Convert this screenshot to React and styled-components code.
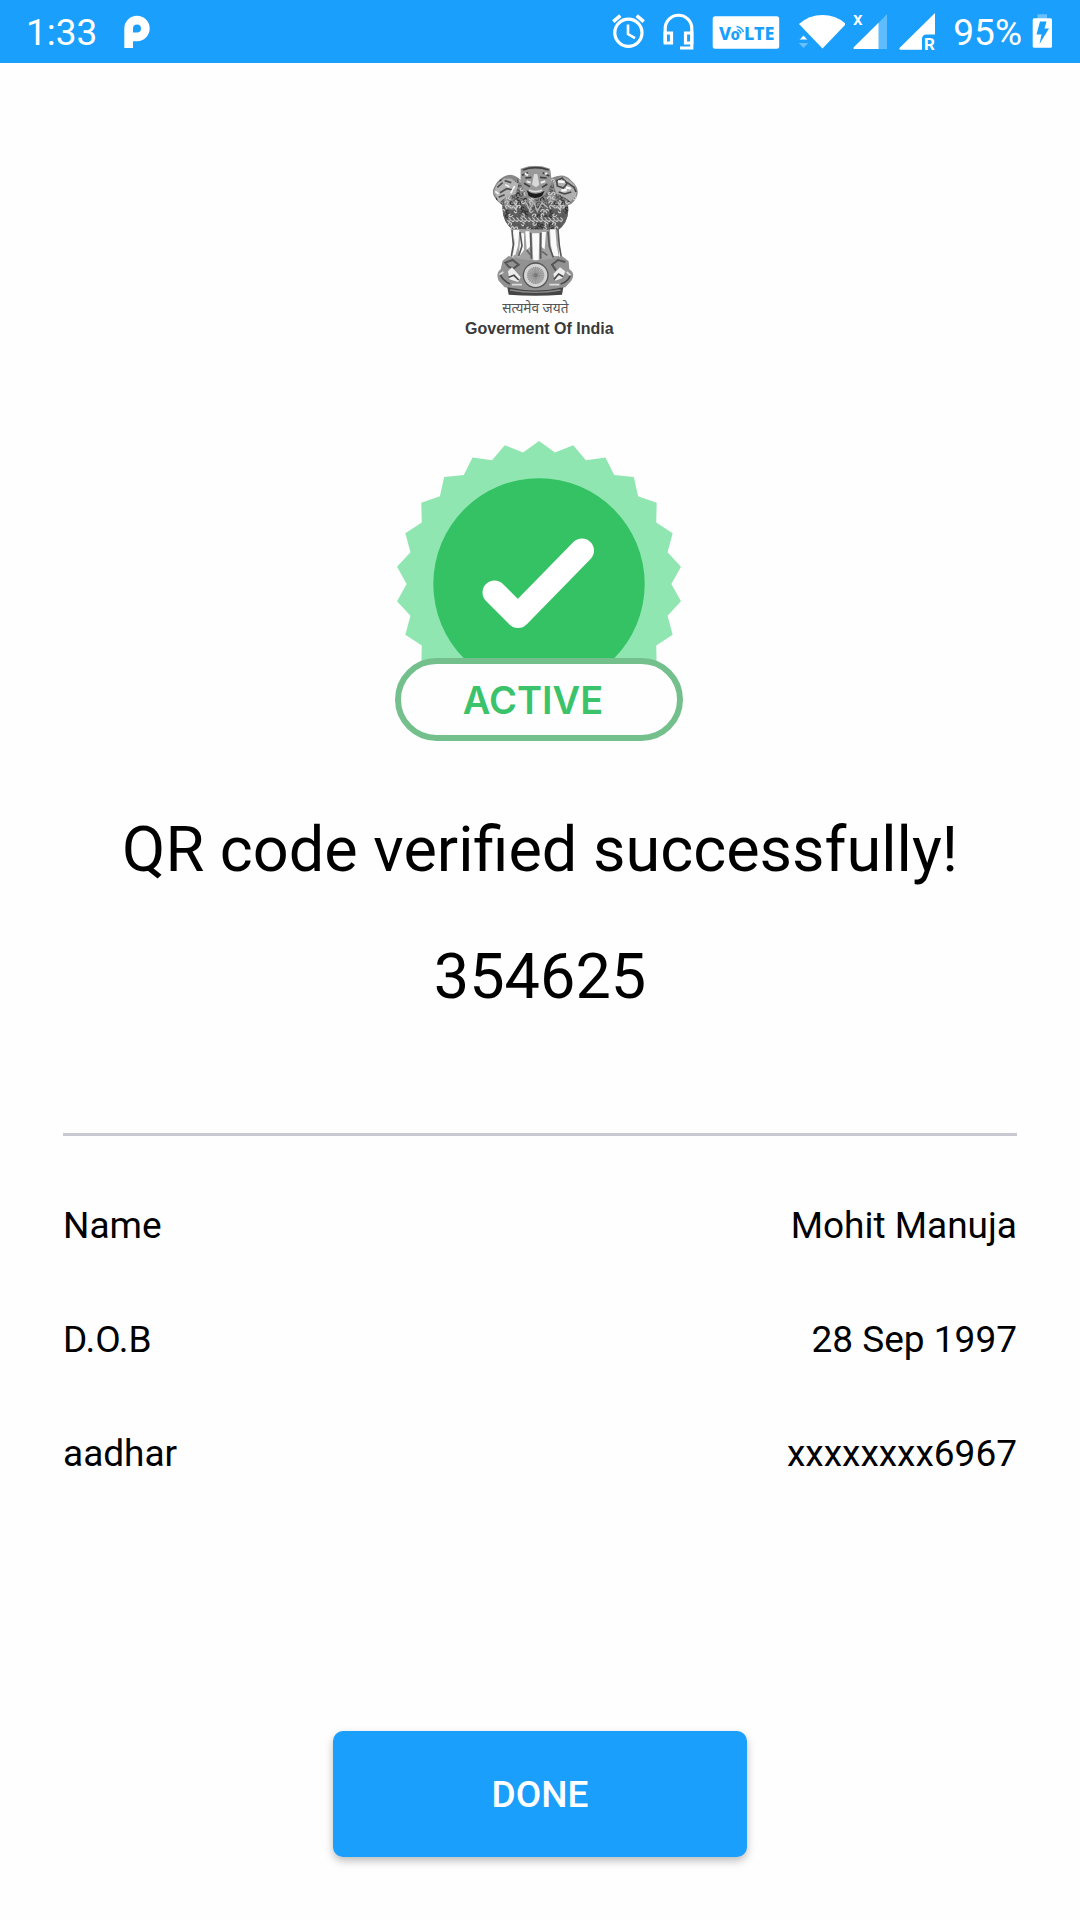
import React from "react";
import styled, { createGlobalStyle } from "styled-components";

const blue = "#1b9ffc";

const GlobalStyle = createGlobalStyle`
  * { box-sizing: border-box; }
  body {
    margin: 0;
    background: #fefefe;
    color: #000;
    font-family: Roboto, "Noto Sans", sans-serif;
  }
`;

const Screen = styled.div`
  min-height: 100vh;
  display: flex;
  flex-direction: column;
`;

const StatusBar = styled.header`
  display: flex;
  align-items: center;
  justify-content: space-between;
  height: 63px;
  padding: 0 28px 0 26px;
  background: ${blue};
  color: #fff;
  font-size: 37px;
  line-height: 44px;
`;

const StatusGroup = styled.div`
  display: flex;
  align-items: center;
  gap: ${(p) => p.$gap}px;
`;

const StatusIcon = styled.svg`
  display: block;
  flex: none;
  height: 63px;
`;

const StatusText = styled.span`
  padding-top: 3px;
  padding-left: ${(p) => p.$inset || 0}px;
`;

const Content = styled.main`
  flex: 1;
  display: flex;
  flex-direction: column;
  align-items: center;
  padding: 100px 63px 63px;
`;

const Drawing = styled.svg`
  display: block;
  flex: none;
`;

const BadgeSlot = styled.div`
  margin-top: 97px;
`;

const Headline = styled.h1`
  margin: 72px 0 0;
  font-size: 63px;
  line-height: 74px;
  font-weight: 400;
  text-align: center;
`;

const Code = styled.p`
  margin: 53px 0 0;
  font-size: 63px;
  line-height: 74px;
`;

const Details = styled.dl`
  align-self: stretch;
  display: flex;
  flex-direction: column;
  gap: 72px;
  margin: 119px 0 72px;
  padding-top: 69px;
  border-top: 3px solid #c9c9d2;
`;

const DetailRow = styled.div`
  display: flex;
  justify-content: space-between;
  font-size: 37px;
  line-height: 42px;
`;

const Label = styled.dt`
  margin: 0;
`;

const Value = styled.dd`
  margin: 0;
`;

const DoneButton = styled.button`
  margin-top: auto;
  width: 414px;
  height: 126px;
  padding: 2px 0 0;
  border: 0;
  border-radius: 10px;
  background: ${blue};
  color: #fff;
  font: 500 37px/44px Roboto, sans-serif;
  box-shadow: 0 4px 8px rgba(0, 0, 0, 0.26);
  cursor: pointer;
`;

function Glyph({ x, width, children }) {
  return (
    <StatusIcon width={width} viewBox={`${x} 0 ${width} 63`} fill="#fff" aria-hidden="true">
      {children}
    </StatusIcon>
  );
}

const ParkingGlyph = () => (
  <Glyph x={125} width={27}>
    <path
      fillRule="evenodd"
      d="M125.300 48V28.500A12.700 12.700 0 1 1 138 41.200H134V48ZM134 32.500H138A4 4 0 1 0 134 28.500Z"
    />
  </Glyph>
);

const AlarmGlyph = () => (
  <Glyph x={608} width={40}>
    <g fill="none" stroke="#fff" strokeWidth="3.200">
      <circle cx="627.400" cy="32.800" r="13.600" />
      <path d="M627 24.500V34L634 38.200" strokeWidth="2.600" />
      <path d="M612.300 21.600L619.300 15.700M635.700 15.700L642.700 21.600" strokeWidth="3.600" />
    </g>
  </Glyph>
);

const HeadsetGlyph = () => (
  <Glyph x={656} width={43}>
    <g fill="none" stroke="#fff" strokeWidth="3.200">
      <path d="M664.200 42.500V28.500A13.300 13.300 0 0 1 690.800 28.500V48H679" />
      <path d="M664.200 33H670.500V43H664.200ZM690.800 33H684.500V43H690.800Z" />
    </g>
  </Glyph>
);

const VolteGlyph = () => (
  <Glyph x={707} width={75}>
    <rect x="711.700" y="16.300" width="66.500" height="32.500" rx="2.500" />
    <g fill={blue} fontFamily='"Noto Sans", sans-serif' fontWeight="800">
      <text x="718" y="40" fontSize="18">V</text>
      <text x="729.500" y="40" fontSize="15">o</text>
      <text x="743" y="40" fontSize="18">LTE</text>
    </g>
    <g fill="none" stroke={blue} strokeWidth="1.500">
      <path d="M736.500 29.500A5.500 5.500 0 0 1 740 33.500" />
      <path d="M735.500 26.500A9 9 0 0 1 742.500 32" />
    </g>
  </Glyph>
);

const WifiGlyph = () => (
  <Glyph x={790} width={54}>
    <path d="M821.500 48.500L798 24Q808 15 821.500 15T845 24Z" />
    <path d="M797.800 40L802.500 35L807.200 40Z" stroke={blue} strokeWidth="1" />
    <path d="M797.800 43L802.500 48L807.200 43Z" opacity="0.350" />
  </Glyph>
);

const SignalGlyph = () => (
  <Glyph x={852} width={35}>
    <path d="M886 14V49H853Z" opacity="0.300" />
    <path d="M877.500 22.700V49H853.500Q851.500 48.700 853 47Z" />
    <text x="852" y="25" fontSize="19" fontWeight="500" fontFamily="Roboto, sans-serif">x</text>
  </Glyph>
);

const RoamingGlyph = () => (
  <Glyph x={895} width={41}>
    <path d="M934 13V34.500H925.500Q921 34.500 921 39V49.700H899.500Q897.500 49.300 899 47.500Z" />
    <text x="923" y="49.500" fontSize="17" fontWeight="700" fontFamily="Roboto, sans-serif">R</text>
  </Glyph>
);

const BatteryGlyph = () => (
  <Glyph x={1030} width={22}>
    <rect x="1037.500" y="14.300" width="9.500" height="4.500" opacity="0.350" />
    <rect x="1032.700" y="18.300" width="19.300" height="29.500" rx="1.500" />
    <path d="M1040 21.500H1046.500L1044.500 28.500H1049L1039.500 44L1041.500 34.500H1036.500Z" fill={blue} />
  </Glyph>
);

/* Curled locks of the manes, row by row inside the lions' silhouette. */
const locks = [];
for (let row = 0; row < 12; row += 1) {
  const y = 92 + row * 13;
  const half = row < 2 ? 104 : row < 5 ? 114 : row < 8 ? 98 : 88 - (row - 8) * 6;
  for (let x = 256 - half; x <= 256 + half; x += 12) {
    const n = (row * 37 + Math.round(x) * 13 + row * Math.round(x)) % 11;
    locks.push({ x: x + (n % 4), y: y + (n % 3) * 3, turn: n * 33, light: n % 3 === 0, dark: n > 6 });
  }
}

const spokes = Array.from({ length: 12 }, (_, i) => (i * Math.PI) / 12);

function Emblem() {
  return (
    <Drawing width="170" height="180" viewBox="15 39 510 540" role="img" aria-label="State Emblem of India">
      <defs>
        <clipPath id="manes">
          <path d="M212 56Q256 38 300 56L304 84Q342 66 362 90Q388 112 382 134Q376 158 354 166Q360 216 322 242Q290 236 258 250Q222 236 190 240Q154 214 158 166Q128 146 128 122Q144 78 180 74Q200 76 212 90Z" />
        </clipPath>
        <filter id="soften">
          <feGaussianBlur stdDeviation="2.200" />
        </filter>
      </defs>
      <g filter="url(#soften)">
        <g clipPath="url(#manes)">
          <rect x="120" y="40" width="270" height="215" fill="#888" />
          <path d="M156 165Q200 200 214 150L236 180H280L306 150Q320 200 358 165V250H156Z" fill="#606060" />
          {locks.map((l, i) => (
            <path
              key={i}
              d="M-6 3Q-3 -7 4 -3Q7 2 1 4"
              transform={`translate(${l.x} ${l.y}) rotate(${l.turn})`}
              fill="none"
              stroke={l.light ? "#cacaca" : l.dark ? "#303030" : "#555"}
              strokeWidth="3.400"
            />
          ))}
        </g>
        {/* side heads */}
        <path d="M140 104Q158 82 184 86L206 102L196 132L166 142L148 158L132 126Z" fill="#b4b4b4" />
        <path d="M142 112L158 98M164 92L184 98M150 128L170 116L190 120M146 142L164 134" stroke="#505050" strokeWidth="5" fill="none" />
        <path d="M166 104L178 110M136 124L146 132M182 130L194 108" stroke="#f4f4f4" strokeWidth="5" />
        <path d="M374 106Q356 82 332 80L310 100L318 130L344 142L362 156L380 128Z" fill="#b0b0b0" />
        <path d="M320 92L336 84L352 100L340 114L322 108ZM352 98L372 112L378 126M326 126L344 132L364 126" stroke="#484848" strokeWidth="5" fill="none" />
        <path d="M324 94L344 96M348 112L362 116M334 122L350 120" stroke="#fff" strokeWidth="7" />
        {/* central head */}
        <path d="M214 58Q256 38 300 58L304 98Q294 140 256 148Q222 140 212 98Z" fill="#989898" />
        <path d="M218 60Q256 46 296 60M216 76L234 68M278 68L298 78M226 84L244 82M270 82L290 84M222 100L240 110M292 102L276 112" stroke="#404040" strokeWidth="5" fill="none" />
        <path d="M252 72L262 72L268 104L258 112L246 104Z" fill="#d8d8d8" />
        <path d="M230 94L242 98M272 98L286 94M224 70L234 76M284 72L292 70" stroke="#f0f0f0" strokeWidth="6" />
        <path d="M230 120Q256 142 284 122L276 138Q256 150 236 138Z" fill="#1c1c1c" />
        <path d="M238 120Q256 130 276 120" stroke="#ddd" strokeWidth="5" fill="none" />
        <path d="M224 150L238 178L252 158L262 184L276 158L294 174" stroke="#b4b4b4" strokeWidth="4" fill="none" />
        {/* legs */}
        <path d="M178 236L194 246L188 318L200 334H316L328 320L322 240Z" fill="#a2a2a2" />
        <path d="M190 240H208L204 288L196 314L188 318L194 280ZM212 250L222 250L222 300L206 322ZM246 250H268L266 334H250ZM226 244H238L240 290L230 300ZM276 246H288L284 298L274 290ZM300 238H316L320 286L326 318L308 318L302 280Z" fill="#fafafa" />
        <path d="M186 240L190 284L184 320M210 246L216 288L206 318M242 248L244 326M272 248L272 326M294 244L298 290L310 322M324 240L328 288L334 322" stroke="#585858" strokeWidth="5" fill="none" />
        <path d="M230 300L242 316M276 304L292 316" stroke="#666" strokeWidth="5" />
        {/* abacus */}
        <path d="M176 318Q254 344 336 318L356 334L358 358Q378 370 364 392L346 412Q256 430 164 412L146 392Q136 370 152 358L158 332Z" fill="#929292" />
        <path d="M166 338L188 330L206 344L190 356L176 350ZM346 336L324 330L306 344L318 362" fill="none" stroke="#555" strokeWidth="6" />
        <path d="M174 364L186 352L202 370L212 382L204 396L178 388ZM310 372L330 352L346 364L338 384L316 392Z" fill="#ededed" />
        <path d="M176 382L192 376L206 390M312 388L326 372L340 380M150 372Q158 392 180 402M362 374Q354 396 332 402" stroke="#4a4a4a" strokeWidth="5" fill="none" />
        <path d="M148 374L160 366M350 366L362 376M186 404H216M298 404H328" stroke="#dcdcdc" strokeWidth="5" />
        <circle cx="257" cy="376" r="37" fill="#d4d4d4" stroke="#565656" strokeWidth="4" />
        <circle cx="257" cy="376" r="26" fill="#b0b0b0" />
        {spokes.map((a) => (
          <path
            key={a}
            d={`M${257 - 26 * Math.cos(a)} ${376 - 26 * Math.sin(a)}L${257 + 26 * Math.cos(a)} ${376 + 26 * Math.sin(a)}`}
            stroke="#8a8a8a"
            strokeWidth="2"
          />
        ))}
        <circle cx="257" cy="376" r="6" fill="#777" />
        <path d="M172 412Q256 430 340 412L336 434Q256 440 176 434Z" fill="#444" />
        <path d="M180 420Q256 434 332 420" stroke="#8c8c8c" strokeWidth="4" fill="none" />
      </g>
      <text x="256" y="488" textAnchor="middle" fontSize="41" fill="#555" fontFamily='"Noto Sans", "Noto Sans Devanagari", sans-serif'>
        सत्यमेव जयते
      </text>
      <text x="268" y="551" textAnchor="middle" fontSize="48" fontWeight="700" fill="#3a3a3a" fontFamily='"Liberation Sans", Arial, sans-serif'>
        Goverment Of India
      </text>
    </Drawing>
  );
}

const SEAL_POINTS = 26;
const seal = Array.from({ length: SEAL_POINTS * 2 }, (_, i) => {
  const r = i % 2 ? 132.4 : 143;
  const a = (i * Math.PI) / SEAL_POINTS;
  return `${(145 + r * Math.sin(a)).toFixed(2)},${(144 - r * Math.cos(a)).toFixed(2)}`;
}).join(" ");

function ActiveBadge() {
  return (
    <Drawing width="290" height="301" viewBox="1 0 290 301" role="img" aria-label="Active">
      <polygon points={seal} fill="#90e6b0" />
      <circle cx="145" cy="144" r="105.700" fill="#34c264" />
      <path d="M100.500 152.500L124 176L188 110.500" fill="none" stroke="#fff" strokeWidth="24" strokeLinecap="round" strokeLinejoin="round" />
      <path d="M0 221H290V301H0Z" fill="#fefefe" />
      <rect x="4" y="221" width="282" height="77" rx="38.500" fill="#fefefe" stroke="#74c08d" strokeWidth="6" />
      <text x="139" y="274" textAnchor="middle" fontSize="38" fontWeight="600" fill="#3bc36b" fontFamily="Inter, sans-serif">
        ACTIVE
      </text>
    </Drawing>
  );
}

const details = [
  { label: "Name", value: "Mohit Manuja" },
  { label: "D.O.B", value: "28 Sep 1997" },
  { label: "aadhar", value: "xxxxxxxx6967" },
];

export default function App() {
  return (
    <Screen>
      <GlobalStyle />
      <StatusBar>
        <StatusGroup $gap={27}>
          <StatusText>1:33</StatusText>
          <ParkingGlyph />
        </StatusGroup>
        <StatusGroup $gap={8}>
          <AlarmGlyph />
          <HeadsetGlyph />
          <VolteGlyph />
          <WifiGlyph />
          <SignalGlyph />
          <RoamingGlyph />
          <StatusText $inset={8}>95%</StatusText>
          <BatteryGlyph />
        </StatusGroup>
      </StatusBar>
      <Content>
        <Emblem />
        <BadgeSlot>
          <ActiveBadge />
        </BadgeSlot>
        <Headline>QR code verified successfully!</Headline>
        <Code>354625</Code>
        <Details>
          {details.map((d) => (
            <DetailRow key={d.label}>
              <Label>{d.label}</Label>
              <Value>{d.value}</Value>
            </DetailRow>
          ))}
        </Details>
        <DoneButton type="button">DONE</DoneButton>
      </Content>
    </Screen>
  );
}
